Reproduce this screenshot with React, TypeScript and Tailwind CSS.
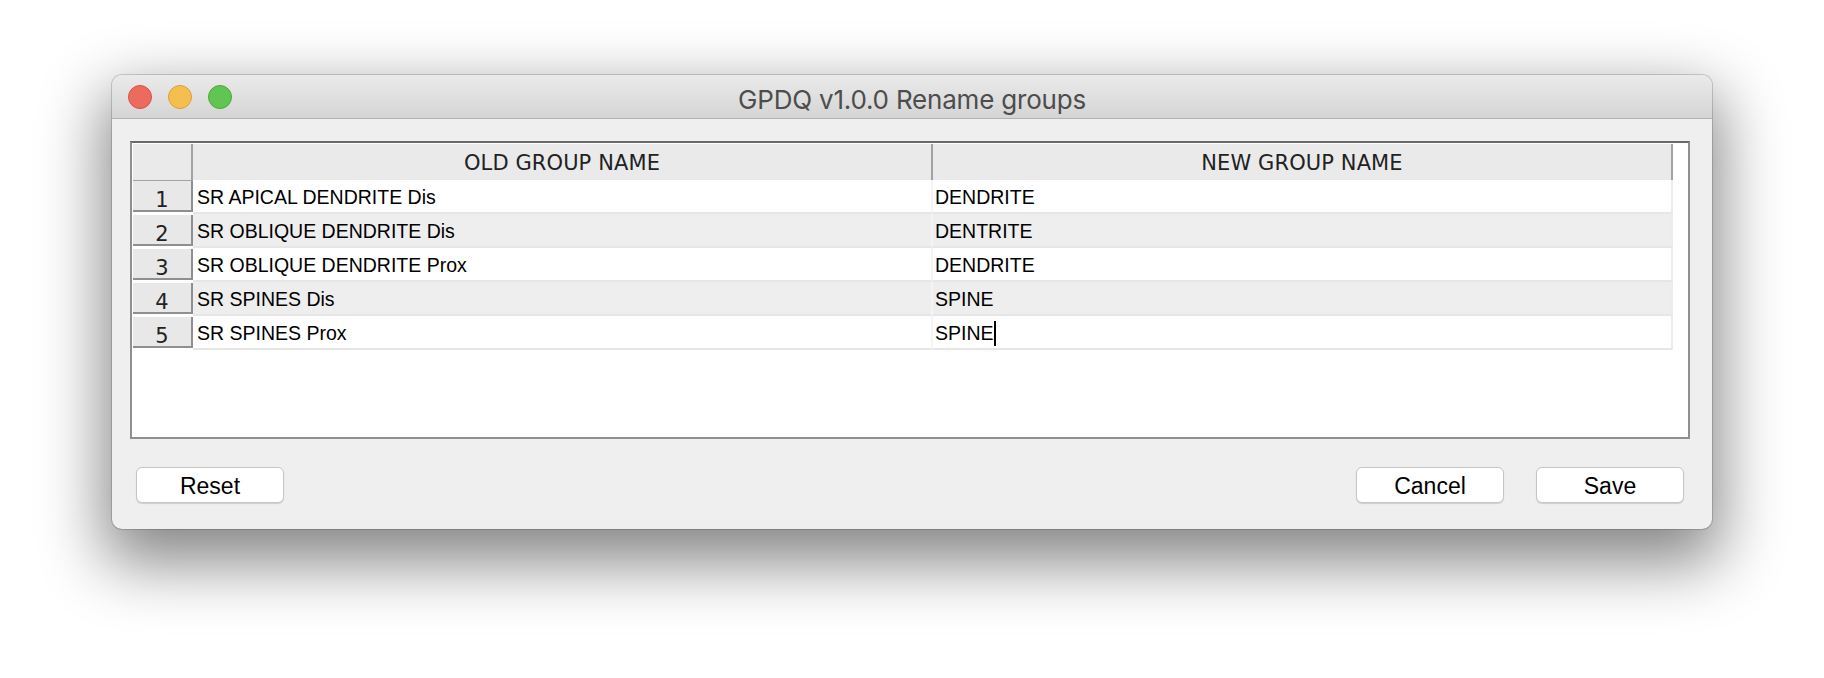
import React from "react";

const rows = [
  { n: 1, old: "SR APICAL DENDRITE Dis", neu: "DENDRITE" },
  { n: 2, old: "SR OBLIQUE DENDRITE Dis", neu: "DENTRITE" },
  { n: 3, old: "SR OBLIQUE DENDRITE Prox", neu: "DENDRITE" },
  { n: 4, old: "SR SPINES Dis", neu: "SPINE" },
  { n: 5, old: "SR SPINES Prox", neu: "SPINE" },
];

const headerFont = { fontFamily: '"DejaVu Sans", "Open Sans", sans-serif' };

function Button({ label }: { label: string }) {
  return (
    <button className="w-[148px] h-[36px] rounded-[6px] bg-white border border-[#c6c6c6] shadow-[0_1px_1px_rgba(0,0,0,0.14)] text-[23px] text-black flex items-center justify-center pt-[3px] font-['Liberation_Sans',Arial,sans-serif]">
      {label}
    </button>
  );
}

export default function App() {
  return (
    <div className="w-[1824px] h-[678px] bg-white pt-[75px] pl-[112px]">
      <div className="w-[1600px] h-[454px] rounded-[10px] overflow-hidden flex flex-col shadow-[0_0_0_1px_rgba(0,0,0,0.16),0_26px_64px_8px_rgba(0,0,0,0.48)] bg-[#efefef]">
        {/* Title bar */}
        <div className="h-[44px] shrink-0 grid grid-cols-[1fr_auto_1fr] items-center bg-gradient-to-b from-[#ebeaeb] to-[#d5d5d5] border-b border-[#b3b3b3]">
          <div className="flex items-center gap-[16px] pl-[16px]">
            <span className="w-[24px] h-[24px] rounded-full bg-[#ed6a5e] border border-[#d65247]" />
            <span className="w-[24px] h-[24px] rounded-full bg-[#f5bf4f] border border-[#d8a03c]" />
            <span className="w-[24px] h-[24px] rounded-full bg-[#61c554] border border-[#4fa63f]" />
          </div>
          <div className="text-[26px] text-[#4d4d4d] font-['Inter',sans-serif] leading-none tracking-[-0.2px] pt-[6px]">
            GPDQ v1.0.0 Rename groups
          </div>
          <div />
        </div>

        {/* Body */}
        <div className="flex-1 flex flex-col pt-[22px] pl-[18px] pr-[22px]">
          <div className="h-[298px] bg-white border-2 border-[#8f8f8f] border-t-[#6a6a6a] p-[1px]">
            <div className="w-[1540px]">
              {/* Header */}
              <div className="grid grid-cols-[60px_740px_740px] h-[36px]" style={headerFont}>
                <div className="bg-[#eaeaea] border-r-2 border-b-2 border-[#a3a3a3]" />
                <div className="bg-[#eaeaea] border-r-2 border-b-2 border-[#a3a3a3] flex items-center justify-center pt-[4px] text-[21px] tracking-[0.1px] text-[#222]">
                  OLD GROUP NAME
                </div>
                <div className="bg-[#eaeaea] border-r-2 border-b-2 border-[#a3a3a3] flex items-center justify-center pt-[4px] text-[21px] tracking-[0.1px] text-[#222]">
                  NEW GROUP NAME
                </div>
              </div>
              {/* Rows */}
              {rows.map((r, i) => {
                const bg = i % 2 === 1 ? "bg-[#eeeeee]" : "bg-white";
                return (
                  <div key={r.n} className="grid grid-cols-[60px_740px_740px] h-[34px]">
                    <div className="h-[34px] pt-[1px]">
                      <div
                        className="h-[31px] bg-[#e8e8e8] border-r-2 border-b-2 border-[#8f8f8f] flex items-center justify-center pt-[10px] text-[21px] text-[#222] leading-none"
                        style={headerFont}
                      >
                        {r.n}
                      </div>
                    </div>
                    <div className={`${bg} border-b-2 border-r-2 border-b-[#e6e6e6] border-r-[#f4f4f4] flex items-center pl-[4px] pt-[3px] text-[19.5px] text-black font-['Liberation_Sans',Arial,sans-serif]`}>
                      {r.old}
                    </div>
                    <div className={`${bg} border-b-2 border-r-2 border-b-[#e6e6e6] border-r-[#ececec] flex items-center pl-[2px] pt-[3px] text-[19.5px] text-black font-['Liberation_Sans',Arial,sans-serif]`}>
                      <span>{r.neu}</span>
                      {i === 4 && <span className="inline-block w-[2px] h-[25px] bg-black" />}
                    </div>
                  </div>
                );
              })}
            </div>
          </div>

          {/* Buttons */}
          <div className="flex items-center mt-[28px] pl-[6px] pr-[6px]">
            <Button label="Reset" />
            <div className="flex-1" />
            <div className="flex gap-[32px]">
              <Button label="Cancel" />
              <Button label="Save" />
            </div>
          </div>
        </div>
      </div>
    </div>
  );
}
